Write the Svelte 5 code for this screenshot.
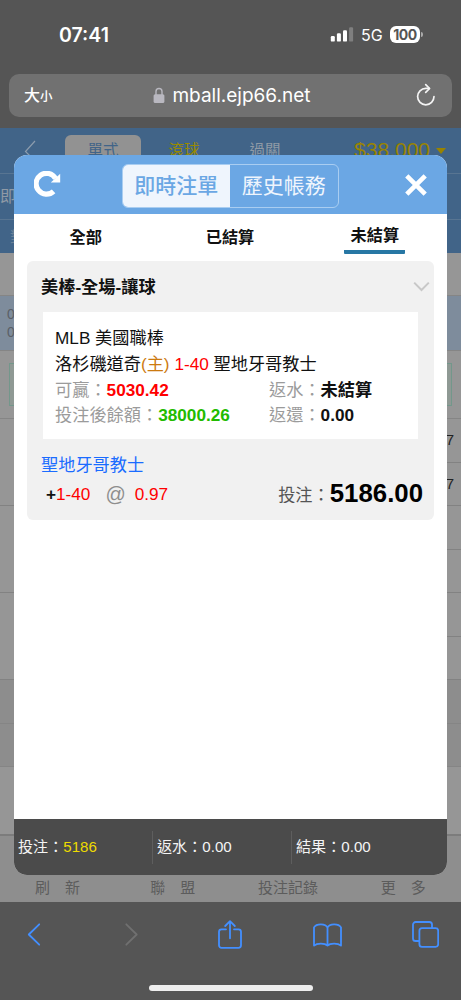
<script lang="ts">
	const filters = [`全部`, `已結算`, `未結算`];
	const totals = [
		{ label: `投注`, value: `5186`, highlight: true },
		{ label: `返水`, value: `0.00`, highlight: false },
		{ label: `結果`, value: `0.00`, highlight: false },
	];
	const menu = [`刷　新`, `聯　盟`, `投注記錄`, `更　多`];
	const games = [
		[`7`, `7`],
		[``, ``],
		[``, ``],
	];

	let filter = $state(`未結算`);
	let page = $state(`now`);
</script>

<div class="phone" lang="zh-Hant">
	<header class="browser-top">
		<div class="status">
			<span class="time">07:41</span>
			<div class="status__right">
				<svg width="24" height="15" viewBox="0 0 24 15" fill="#fff">
					<rect x="0.8" y="9" width="4" height="5.6" rx="1.2" />
					<rect x="6.9" y="6.2" width="4" height="8.4" rx="1.2" />
					<rect x="13" y="3.2" width="4" height="11.4" rx="1.2" />
					<rect x="19.1" y="0.2" width="4" height="14.4" rx="1.2" opacity="0.25" />
				</svg>
				<span class="network">5G</span>
				<span class="battery">100</span>
				<i class="battery-tip"></i>
			</div>
		</div>
		<div class="address">
			<span class="text-size">大<small>小</small></span>
			<div class="host">
				<svg width="12" height="17" viewBox="0 0 12 17">
					<path d="M3 8V4.5a3 3 0 0 1 6 0V8" fill="none" stroke="#b9b8c0" stroke-width="1.4" />
					<rect x="0.6" y="7.2" width="10.8" height="8.8" rx="1.6" fill="#b9b8c0" />
				</svg>
				<span>mball.ejp66.net</span>
			</div>
			<svg class="reload" width="20" height="24" viewBox="0 0 20 24" fill="none" stroke="#f4f4f4" stroke-width="1.7" stroke-linecap="round" stroke-linejoin="round">
				<path d="M18 13.6A8.2 8.2 0 1 1 9.8 5.4h3.4" />
				<path d="M9.7 1.6l3.9 3.9-3.9 3.9" />
			</svg>
		</div>
	</header>

	<main>
		<div class="site-nav">
			<svg width="12" height="20" viewBox="0 0 12 20" fill="none" stroke="#8c9cad" stroke-width="1.2">
				<path d="M11 1L1.5 11.5 10 20" />
			</svg>
			<span class="site-nav__item active">單式</span>
			<span class="site-nav__item live">滾球</span>
			<span class="site-nav__item">過關</span>
			<span class="balance">$38,000</span>
			<i class="caret"></i>
		</div>
		<div class="site-sub">即</div>
		<div class="site-head">對</div>
		<div class="line spacer"></div>
		<div class="line date"><span>08</span><span>07</span></div>
		<div class="line promo"><div></div></div>
		{#each games as game}
			<div class="game">
				<div class="game__team"></div>
				{#each game as odd}
					<div class="game__odd">{odd}</div>
				{/each}
			</div>
		{/each}
		<div class="line dark"></div>
		<div class="line dark last"></div>
		<div class="line tail"></div>
		<nav class="menu">
			{#each menu as item}
				<span>{item}</span>
			{/each}
		</nav>

		<section class="modal">
			<div class="modal__head">
				<svg class="refresh" width="27" height="27" viewBox="0 0 27 27">
					<path d="M19.6 20.3A10.4 10.4 0 1 1 21.5 7.5" fill="none" stroke="#fff" stroke-width="5.2" />
					<path d="M26.2 2.8v8.8h-9.4z" fill="#fff" />
				</svg>
				<div class="switch">
					<button class={page == `now` ? `active` : ``} onclick={() => (page = `now`)}>即時注單</button>
					<button class={page == `history` ? `active` : ``} onclick={() => (page = `history`)}>歷史帳務</button>
				</div>
				<svg class="close" width="22" height="22" viewBox="0 0 22 22" stroke="#fff" stroke-width="4.6">
					<path d="M1.8 1.8l18.4 18.4M20.2 1.8L1.8 20.2" />
				</svg>
			</div>

			<div class="filters">
				{#each filters as name}
					<button class={filter == name ? `active` : ``} onclick={() => (filter = name)}>{name}</button>
				{/each}
			</div>

			<article class="bet">
				<div class="bet__title">
					<h2>美棒-全場-讓球</h2>
					<svg width="17" height="11" viewBox="0 0 17 11" fill="none" stroke="#c8c8c8" stroke-width="2">
						<path d="M1.2 1.6L8.5 9l7.3-7.4" />
					</svg>
				</div>
				<div class="bet__detail">
					<p>MLB 美國職棒</p>
					<p>洛杉磯道奇<span class="home">(主)</span> <span class="red">1-40</span> 聖地牙哥教士</p>
					<div class="pair">
						<p><span class="label">可贏：</span><b class="red">5030.42</b></p>
						<p><span class="label">返水：</span><b>未結算</b></p>
					</div>
					<div class="pair">
						<p><span class="label">投注後餘額：</span><b class="green">38000.26</b></p>
						<p><span class="label">返還：</span><b>0.00</b></p>
					</div>
				</div>
				<div class="bet__pick">聖地牙哥教士</div>
				<div class="bet__stake">
					<b class="plus">+</b>
					<span class="red">1-40</span>
					<span class="at">@</span>
					<span class="red">0.97</span>
					<span class="stake-label">投注：</span>
					<b class="stake">5186.00</b>
				</div>
			</article>

			<footer class="totals">
				{#each totals as total}
					<div>{total.label}：<span class={total.highlight ? `yellow` : ``}>{total.value}</span></div>
				{/each}
			</footer>
		</section>
	</main>

	<footer class="browser-bottom">
		<div class="tools">
			<span><svg width="14" height="23" viewBox="0 0 14 23"><path d="M12.2 1.3L1.8 11.5l10.4 10.2" /></svg></span>
			<span class="off"><svg width="14" height="23" viewBox="0 0 14 23"><path d="M1.3 1.3l10.4 10.2L1.3 21.7" /></svg></span>
			<span>
				<svg width="24" height="29" viewBox="0 0 24 29">
					<path d="M8 9.3H3.5A2.5 2.5 0 0 0 1 11.8v13.5a2.5 2.5 0 0 0 2.5 2.5h17a2.5 2.5 0 0 0 2.5-2.5V11.8a2.5 2.5 0 0 0-2.5-2.5H16" />
					<path d="M12 18.3V1.4M7.2 6L12 1.2 16.8 6" />
				</svg>
			</span>
			<span>
				<svg width="29" height="24" viewBox="0 0 29 24">
					<path d="M14.5 4.6C12.6.4 3.4.3 1 4.4v18.2c3-2.7 10.8-2.7 13.5 0 2.7-2.7 10.5-2.7 13.5 0V4.4C25.6.3 16.4.4 14.5 4.6v18" />
				</svg>
			</span>
			<span>
				<svg width="27" height="27" viewBox="0 0 27 27">
					<rect x="7.4" y="7.2" width="18.8" height="18.6" rx="2.6" />
					<path d="M7.2 20H3.6A2.6 2.6 0 0 1 1 17.4V3.6A2.6 2.6 0 0 1 3.6 1h13.8A2.6 2.6 0 0 1 20 3.6v3.4" />
				</svg>
			</span>
		</div>
		<div class="home-bar"></div>
	</footer>
</div>

<style>
	:global(body) {
		background-color: #555555;
	}
	.phone {
		width: 461px;
		height: 1000px;
		overflow: hidden;
		display: flex;
		flex-direction: column;
		background-color: #555555;
		font-family: "Liberation Sans", "Noto Sans CJK TC", sans-serif;
	}
	.phone * {
		box-sizing: border-box;
	}
	svg {
		display: block;
		flex: none;
	}
	button {
		border: 0;
		padding: 0;
		background: transparent;
		font-family: inherit;
		cursor: pointer;
	}
	p,
	h2 {
		margin: 0;
	}

	.browser-top {
		height: 128px;
		flex: none;
		font-family: Inter, "Noto Sans CJK TC", sans-serif;
		color: white;
	}
	.status {
		height: 74px;
		padding: 0 38px 5px 59px;
		display: flex;
		align-items: center;
		justify-content: space-between;
	}
	.time {
		font-size: 19.5px;
		font-weight: 600;
	}
	.status__right {
		display: flex;
		align-items: center;
	}
	.network {
		margin-left: 7px;
		width: 29px;
		font-size: 16px;
	}
	.battery {
		width: 30px;
		height: 17px;
		border-radius: 6px;
		background-color: white;
		color: #555555;
		font-size: 14px;
		line-height: 17px;
		font-weight: 700;
		letter-spacing: -0.5px;
		text-align: center;
	}
	.battery-tip {
		width: 2px;
		height: 5px;
		margin-left: 1px;
		border-radius: 0 2px 2px 0;
		background-color: #aaaaaa;
	}
	.address {
		height: 43px;
		margin: 0 9px;
		padding: 0 16px 0 15px;
		border-radius: 10px;
		background-color: #717171;
		display: flex;
		align-items: center;
		justify-content: space-between;
	}
	.text-size {
		width: 60px;
		padding-top: 1px;
		font-size: 16px;
		font-weight: 500;
		line-height: 20px;
	}
	.text-size small {
		font-size: 12.5px;
	}
	.host {
		display: flex;
		align-items: center;
		gap: 7px;
		font-size: 19px;
		line-height: 24px;
		margin-left: 26px;
	}
	.reload {
		margin-left: 62px;
		margin-top: -1px;
	}

	main {
		position: relative;
		height: 774px;
		flex: none;
		display: flex;
		flex-direction: column;
		background-color: #969696;
	}
	.site-nav,
	.site-sub,
	.site-head {
		flex: none;
		background-color: #416488;
		color: #8f9aa6;
	}
	.site-nav {
		height: 46px;
		border-bottom: 1px solid #587592;
		display: flex;
		align-items: flex-start;
		padding: 7px 15px 0 24px;
		font-size: 15.5px;
		line-height: 31px;
	}
	.site-nav svg {
		margin: 5px 29px 0 0;
	}
	.site-nav__item {
		width: 76px;
		height: 34px;
		margin-right: 5px;
		text-align: center;
	}
	.site-nav__item.active {
		border-radius: 6px;
		background-color: #929292;
		color: #416488;
	}
	.site-nav__item.live {
		color: #998a00;
	}
	.balance {
		margin-left: auto;
		font-size: 21px;
		line-height: 29px;
		color: #998300;
	}
	.caret {
		margin: 13px 0 0 6px;
		border: 5px solid transparent;
		border-top: 6px solid #998300;
		border-bottom: 0;
	}
	.site-sub {
		height: 46px;
		border-bottom: 1px solid #587592;
		font-size: 16px;
		line-height: 45px;
	}
	.site-head {
		height: 33px;
		padding-left: 10px;
		font-size: 15px;
		line-height: 33px;
		color: #6c8298;
	}
	.line {
		flex: none;
		border-bottom: 1px solid #858585;
	}
	.spacer {
		height: 43px;
	}
	.date {
		height: 55px;
		padding: 9px 7px;
		display: flex;
		flex-direction: column;
		background-color: #7e8c9c;
		color: #5a5f66;
		font-size: 14px;
		line-height: 18px;
	}
	.promo {
		height: 68px;
		padding: 12px 9px;
	}
	.promo div {
		height: 43px;
		border: 1px solid #73978b;
		background-color: #8f9994;
	}
	.game {
		flex: none;
		display: grid;
		grid-template-columns: 1fr 1fr;
		grid-template-rows: 44px 43px;
	}
	.game__team {
		grid-row: span 2;
	}
	.game__team,
	.game__odd {
		border-bottom: 1px solid #828282;
	}
	.game__odd {
		padding-right: 7px;
		text-align: right;
		font-size: 15px;
		line-height: 42px;
		color: #222222;
	}
	.dark {
		height: 44px;
		background-color: #8d8d8d;
	}
	.dark.last {
		height: 43px;
	}
	.tail {
		height: 69px;
		border-bottom: 2px solid #7c7c7c;
	}
	.menu {
		flex: 1;
		display: grid;
		grid-template-columns: repeat(4, 1fr);
		align-items: end;
		padding-bottom: 3px;
		background-color: #8e8e8e;
		color: #5c5c5c;
		font-size: 15px;
		line-height: 22px;
		text-align: center;
	}

	.modal {
		position: absolute;
		top: 27px;
		left: 14px;
		width: 433px;
		height: 720px;
		border-radius: 13px;
		overflow: hidden;
		display: flex;
		flex-direction: column;
		background-color: white;
	}
	.modal__head {
		height: 59px;
		flex: none;
		padding: 0 20px;
		display: flex;
		align-items: center;
		justify-content: space-between;
		background-color: #6ba7e4;
	}
	.switch {
		width: 217px;
		height: 44px;
		margin-right: 6px;
		margin-top: 2px;
		border: 1px solid #a9cdf1;
		border-radius: 6px;
		overflow: hidden;
		display: flex;
	}
	.switch button {
		flex: 1;
		color: #eff5fd;
		font-size: 21px;
		line-height: 42px;
	}
	.switch button.active {
		background-color: #eff5fd;
		color: #6ba7e4;
		font-weight: 500;
	}
	.filters {
		height: 47px;
		flex: none;
		display: grid;
		grid-template-columns: repeat(3, 1fr);
		justify-items: center;
		align-items: start;
	}
	.filters button {
		margin-top: 10px;
		margin-right: 1px;
		font-size: 16.2px;
		font-weight: 700;
		line-height: 26px;
		color: #111111;
	}
	.filters button.active {
		margin-top: 8px;
		margin-right: 0;
		width: 61px;
		height: 32px;
		padding-bottom: 2px;
		border-bottom: 4px solid #2777a4;
		border-radius: 1px;
	}

	.bet {
		height: 259px;
		flex: none;
		margin: 0 13px;
		padding: 0 16px;
		border-radius: 6px;
		background-color: #f1f1f1;
		font-size: 17.2px;
		color: #111111;
	}
	.bet__title {
		height: 51px;
		margin: 0 -12px 0 -2px;
		display: flex;
		align-items: center;
		justify-content: space-between;
	}
	.bet__title h2 {
		margin-top: -2px;
		font-size: 17.2px;
		font-weight: 700;
	}
	.bet__detail {
		height: 127px;
		padding: 14px 12px 0;
		background-color: white;
		line-height: 25.8px;
		white-space: nowrap;
	}
	.bet__detail p {
		height: 25.8px;
	}
	.pair {
		display: grid;
		grid-template-columns: 214px 1fr;
	}
	.label {
		color: #9b9b9b;
	}
	.home {
		color: #cc7a10;
	}
	.red {
		color: #ff0000;
	}
	.green {
		color: #22bb00;
	}
	.bet__pick {
		margin: 12px 0 0 -2px;
		line-height: 28px;
		color: #1a6cff;
	}
	.bet__stake {
		display: flex;
		align-items: center;
		height: 30px;
		margin: 0 -5px 0 3px;
	}
	.plus {
		width: 10px;
	}
	.at {
		margin: 0 9px 0 15px;
		font-size: 20px;
		color: #8e8e8e;
	}
	.stake-label {
		margin-left: auto;
		margin-top: -2px;
		color: #555555;
	}
	.stake {
		margin-top: -2px;
		font-size: 25.8px;
		color: #000000;
	}

	.totals {
		height: 56px;
		flex: none;
		margin-top: auto;
		display: flex;
		align-items: center;
		background-color: #4b4b4b;
		color: #f4f4f4;
		font-size: 15.1px;
	}
	.totals div {
		width: 139px;
		height: 33px;
		padding-left: 4px;
		border-right: 1px solid #5e5e5e;
		line-height: 31px;
	}
	.totals div:last-child {
		border-right: 0;
	}
	.yellow {
		color: #eedb00;
	}

	.browser-bottom {
		flex: 1;
		display: flex;
		flex-direction: column;
		align-items: center;
	}
	.tools {
		width: 100%;
		height: 65px;
		padding: 0 21px 0 19px;
		display: flex;
		align-items: center;
		justify-content: space-between;
	}
	.tools span {
		width: 29px;
		display: flex;
		justify-content: center;
	}
	.tools svg {
		fill: none;
		stroke: #438fff;
		stroke-width: 1.8;
		stroke-linecap: round;
		stroke-linejoin: round;
	}
	.tools .off svg {
		stroke: #707070;
	}
	.home-bar {
		width: 164px;
		height: 6px;
		margin-top: 18px;
		border-radius: 3px;
		background-color: #eeeeee;
	}
</style>
